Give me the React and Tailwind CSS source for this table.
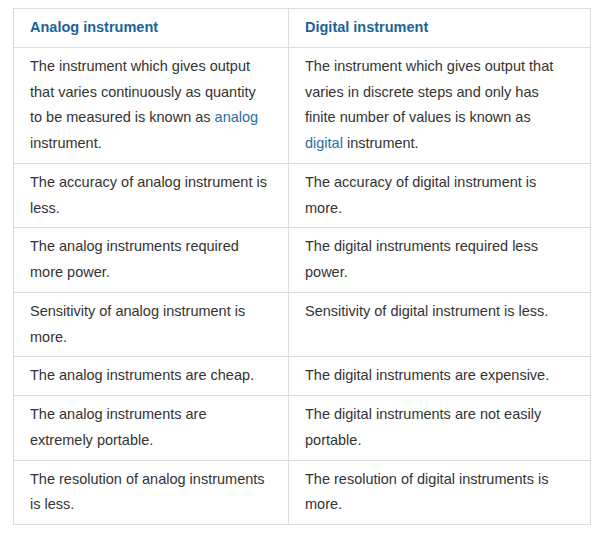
const rows = [
  [
    <>The instrument which gives output that varies continuously as quantity to be measured is known as <a className="text-[#1f6fa8]">analog</a> instrument.</>,
    <>The instrument which gives output that varies in discrete steps and only has finite number of values is known as <a className="text-[#1f6fa8]">digital</a> instrument.</>,
  ],
  ['The accuracy of analog instrument is less.', 'The accuracy of digital instrument is more.'],
  ['The analog instruments required more power.', 'The digital instruments required less power.'],
  ['Sensitivity of analog instrument is more.', 'Sensitivity of digital instrument is less.'],
  ['The analog instruments are cheap.', 'The digital instruments are expensive.'],
  ['The analog instruments are extremely portable.', 'The digital instruments are not easily portable.'],
  ['The resolution of analog instruments is less.', 'The resolution of digital instruments is more.'],
];

export default function App() {
  return (
    <div className="bg-white w-[602px] h-[537px] pt-2 pl-[13px]" style={{ fontFamily: '"Liberation Sans", Arial, sans-serif' }}>
      <table className="border-collapse table-fixed w-[578px] text-[14.5px] leading-[25.75px] text-[#333333]">
        <thead>
          <tr>
            <th className="w-[275px] border border-[#dddddd] text-left font-bold text-[#1a6496] pl-[16px] pr-[18px] py-[6px]">Analog instrument</th>
            <th className="border border-[#dddddd] text-left font-bold text-[#1a6496] pl-[16px] pr-[20px] py-[6px]">Digital instrument</th>
          </tr>
        </thead>
        <tbody>
          {rows.map((r, i) => (
            <tr key={i}>
              <td className="border border-[#dddddd] align-top pl-[16px] pr-[18px] py-[6px]">{r[0]}</td>
              <td className="border border-[#dddddd] align-top pl-[16px] pr-[20px] py-[6px]">{r[1]}</td>
            </tr>
          ))}
        </tbody>
      </table>
    </div>
  );
}
